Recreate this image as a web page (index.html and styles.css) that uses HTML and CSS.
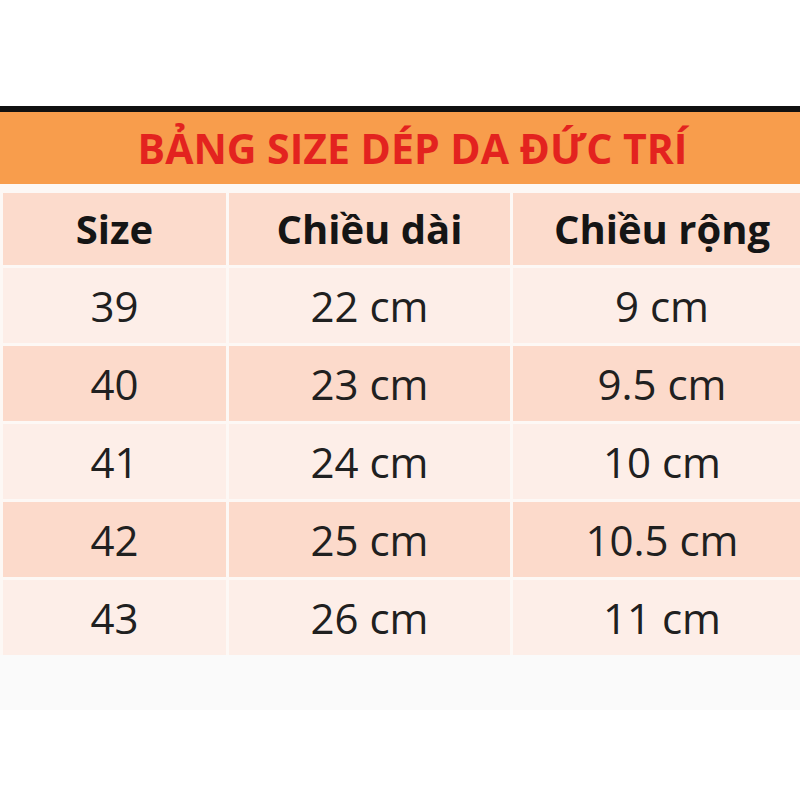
FILE: index.html
```html
<!DOCTYPE html>
<html lang="vi">
<head>
<meta charset="utf-8">
<title>Bảng size dép da Đức Trí</title>
<link rel="stylesheet" href="styles.css">
</head>
<body>
<div class="page">
  <div class="top-space"></div>
  <div class="black-bar"></div>
  <div class="sheet">
    <div class="title">BẢNG SIZE DÉP DA ĐỨC TRÍ</div>
    <div class="table">
      <div class="cell head">Size</div>
      <div class="cell head">Chiều dài</div>
      <div class="cell head">Chiều rộng</div>

      <div class="cell odd">39</div>
      <div class="cell odd">22 cm</div>
      <div class="cell odd">9 cm</div>

      <div class="cell even">40</div>
      <div class="cell even">23 cm</div>
      <div class="cell even">9.5 cm</div>

      <div class="cell odd">41</div>
      <div class="cell odd">24 cm</div>
      <div class="cell odd">10 cm</div>

      <div class="cell even">42</div>
      <div class="cell even">25 cm</div>
      <div class="cell even">10.5 cm</div>

      <div class="cell odd">43</div>
      <div class="cell odd">26 cm</div>
      <div class="cell odd">11 cm</div>
    </div>
    <div class="bottom-space"></div>
  </div>
</div>
</body>
</html>
```

FILE: styles.css
```css
html, body {
  margin: 0;
  padding: 0;
  background: #ffffff;
}

.page {
  width: 800px;
  height: 800px;
  overflow: hidden;
  font-family: "Open Sans", "Noto Sans", sans-serif;
}

.top-space {
  height: 106px;
  background: #ffffff;
}

.black-bar {
  height: 6px;
  background: #111111;
}

.sheet {
  background: #fdf8f5;
  padding-left: 3px;
  width: 820px;
}

.title {
  height: 72px;
  background: #f89d4c;
  color: #e3231f;
  font-weight: 700;
  font-size: 41px;
  line-height: 72px;
  text-align: center;
  margin-left: -3px;
  margin-right: 20px;
  padding-left: 25px;
  padding-right: 3px;
}

.table {
  display: grid;
  grid-template-columns: 223px 281px 298px;
  grid-template-rows: 72px;
  grid-auto-rows: 75px;
  column-gap: 3px;
  row-gap: 3px;
  padding-top: 9px;
}

.cell {
  display: flex;
  align-items: center;
  justify-content: center;
  color: #202020;
  font-size: 42px;
}

.head {
  background: #fcdbcc;
  font-weight: 700;
  font-size: 40px;
  color: #151515;
  padding-bottom: 2px;
}

.odd {
  background: #fdeee8;
}

.even {
  background: #fcdacb;
}

.bottom-space {
  height: 55px;
  background: #fafafa;
  margin-left: -3px;
}
```
